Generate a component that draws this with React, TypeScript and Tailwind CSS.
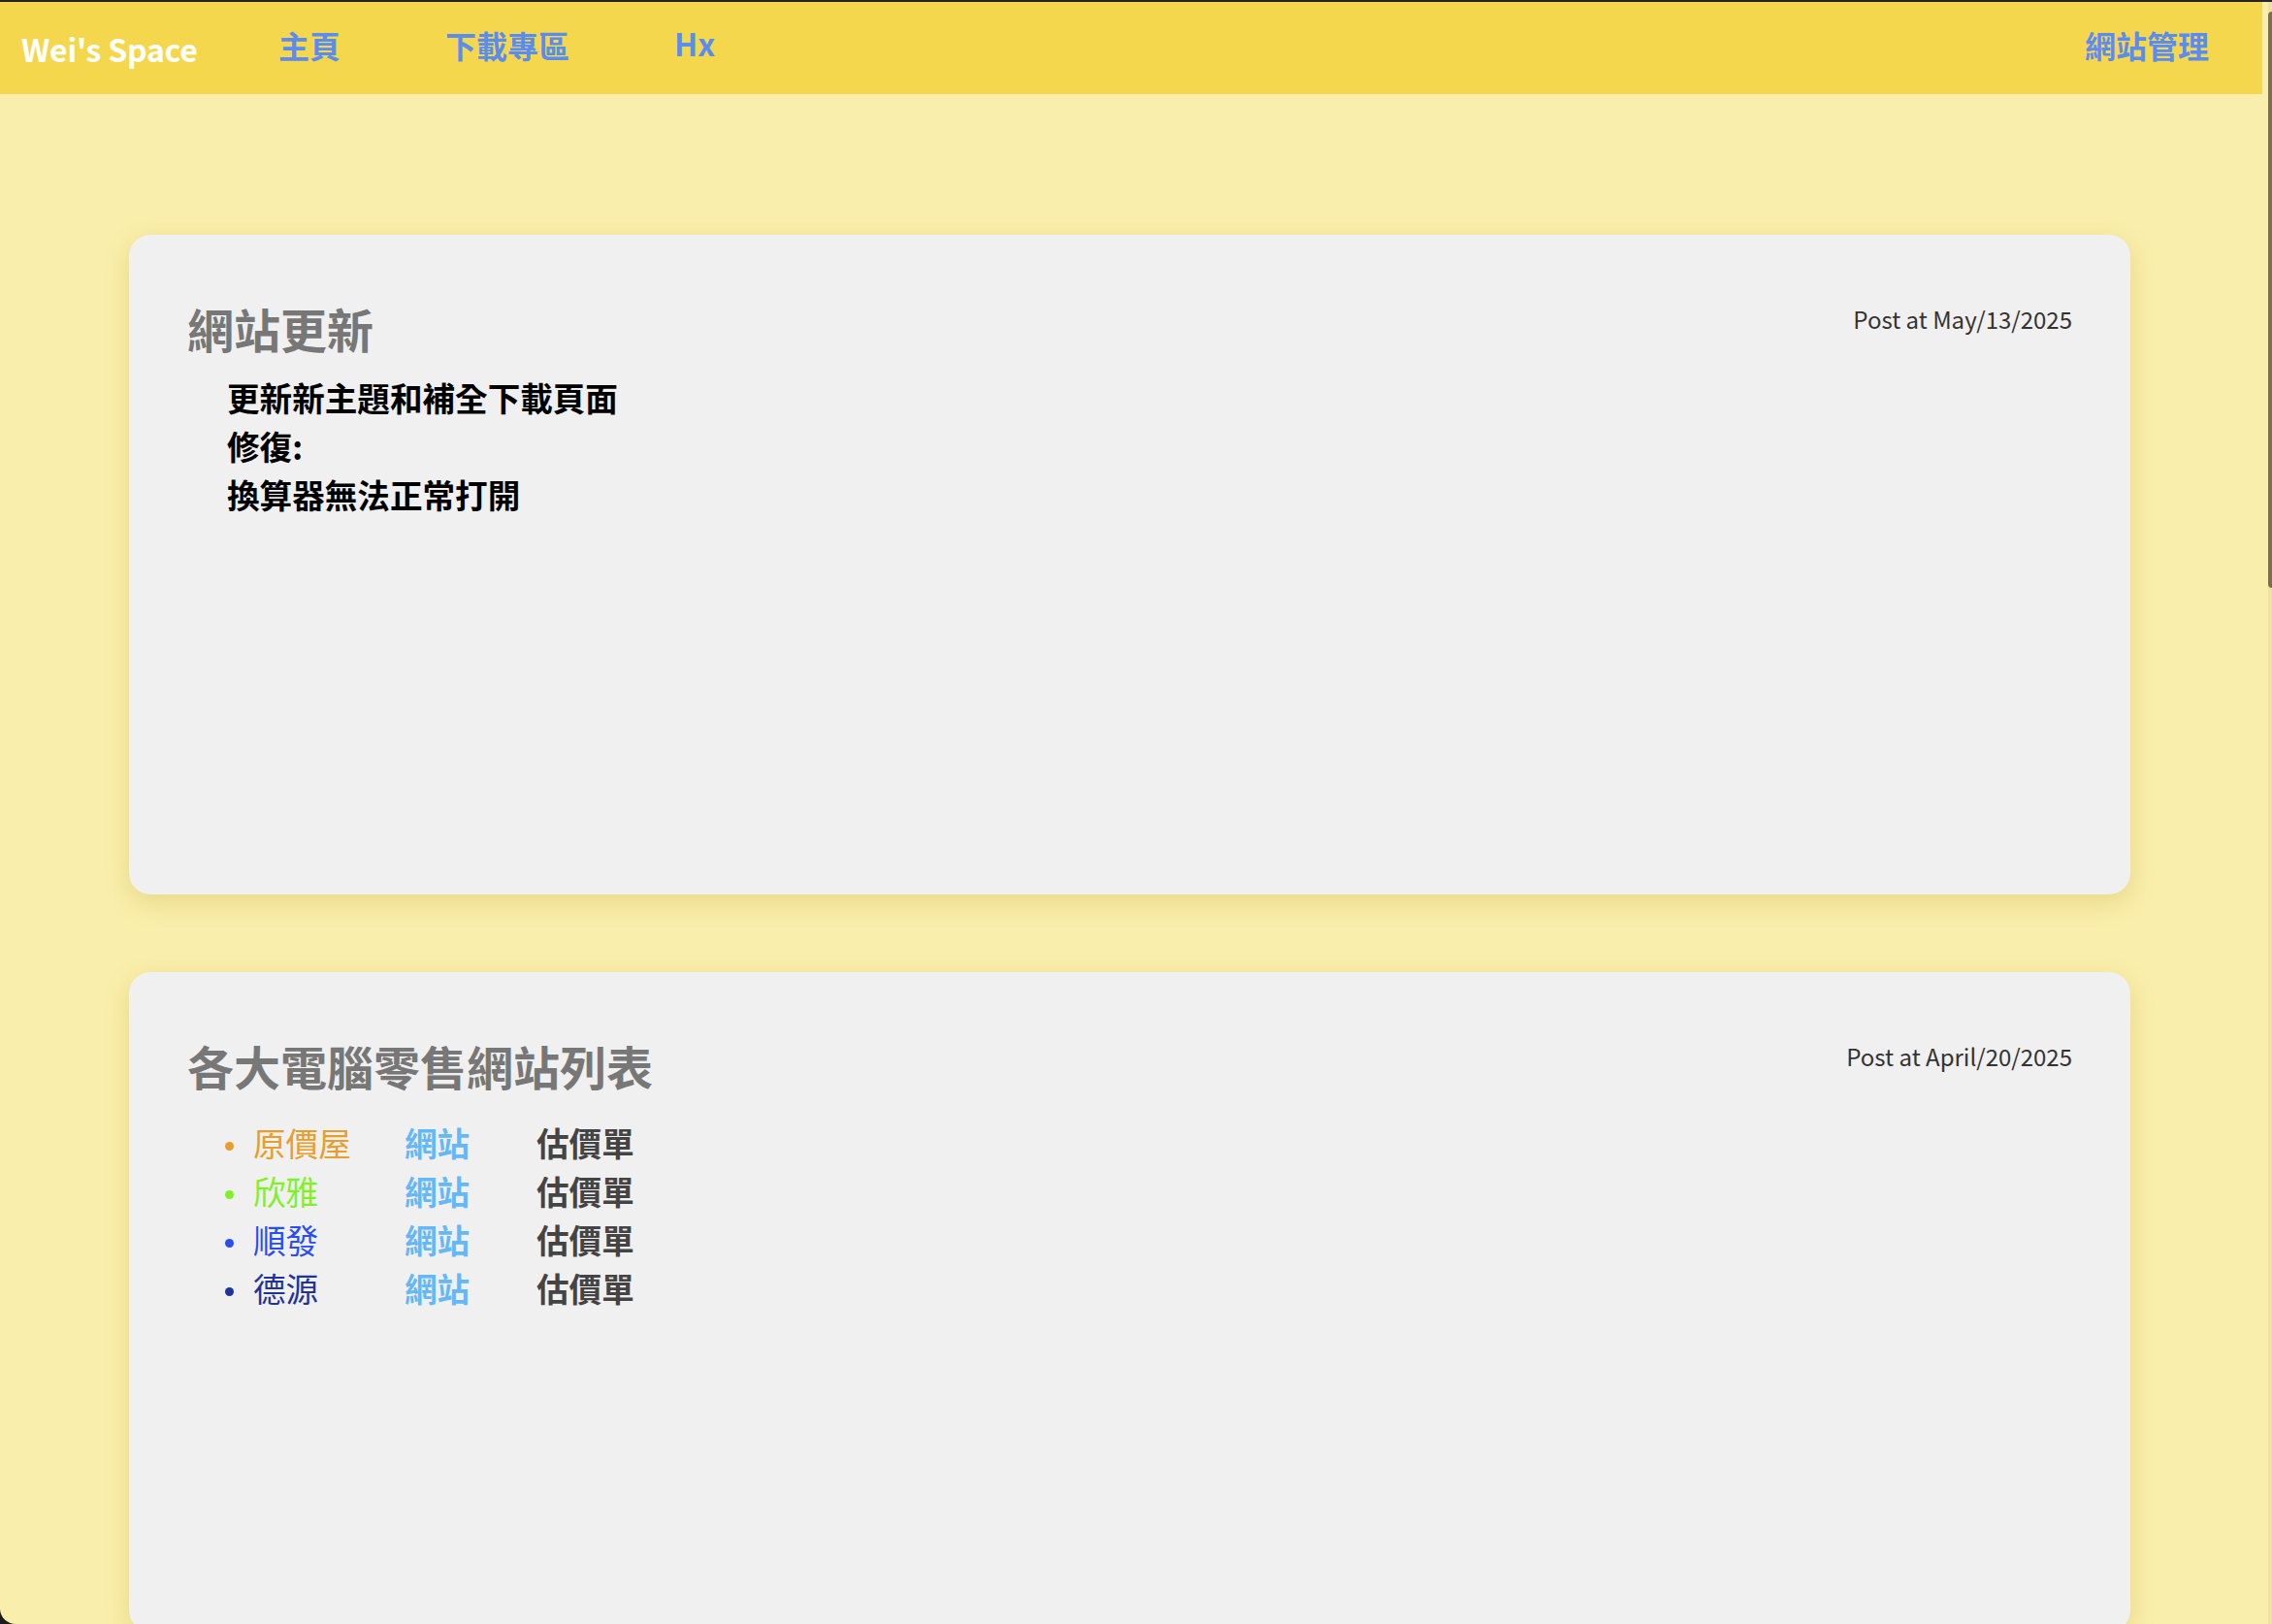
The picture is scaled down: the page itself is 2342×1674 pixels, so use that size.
import * as React from "react";

const shops = [
  { name: "原價屋", color: "text-[#e89e2a]", dot: "bg-[#e89e2a]" },
  { name: "欣雅", color: "text-[#80f028]", dot: "bg-[#80f028]" },
  { name: "順發", color: "text-[#2a4cf5]", dot: "bg-[#2a4cf5]" },
  { name: "德源", color: "text-[#1f3399]", dot: "bg-[#1f3399]" },
];

function Card({
  title,
  date,
  children,
}: {
  title: string;
  date: string;
  children: React.ReactNode;
}) {
  return (
    <section className="h-[680px] shrink-0 rounded-[22px] bg-[#f0f0f0] px-[60px] pt-[72px] shadow-[0_8px_26px_rgba(170,140,20,0.22)]">
      <div className="flex items-start justify-between">
        <h2 className="text-[48px] font-bold leading-none text-[#777]">{title}</h2>
        <p className="mt-[3px] text-[24px] leading-none text-[#333]">{date}</p>
      </div>
      {children}
    </section>
  );
}

export default function App() {
  return (
    <div className="flex h-[1674px] flex-col overflow-hidden bg-[#1c1c1c] font-['Noto_Sans_CJK_TC','Noto_Sans',sans-serif]">
      <div className="h-[2px] shrink-0 bg-[#262626]" />
      <div className="flex min-h-0 flex-1 overflow-hidden rounded-bl-[16px] bg-[#f9eeab]">
        <main className="flex min-w-0 flex-1 flex-col">
          <nav className="flex h-[95px] shrink-0 items-center bg-[#f5d74e] pb-[8px] pl-[22px] pr-[55px]">
            <a className="mt-[8px] w-[265px] text-[32px] font-bold leading-none tracking-[-0.2px] text-white">Wei's Space</a>
            <a className="w-[172px] text-[32px] font-bold leading-none text-[#5b8def]">主頁</a>
            <a className="w-[236px] text-[32px] font-bold leading-none text-[#5b8def]">下載專區</a>
            <a className="mb-[4px] text-[32px] font-bold leading-none text-[#5b8def]">Hx</a>
            <a className="ml-auto text-[32px] font-bold leading-none text-[#5b8def]">網站管理</a>
          </nav>

          <div className="flex flex-col gap-[80px] pl-[133px] pr-[136px] pt-[145px]">
            <Card title="網站更新" date="Post at May/13/2025">
              <div className="ml-[41px] mt-[23px] text-[33.6px] font-bold leading-[50px] text-black">
                <p>更新新主題和補全下載頁面</p>
                <p>修復:</p>
                <p>換算器無法正常打開</p>
              </div>
            </Card>

            <Card title="各大電腦零售網站列表" date="Post at April/20/2025">
              <ul className="mt-[31px] text-[33.6px] leading-[50px]">
                {shops.map((s) => (
                  <li key={s.name} className="flex h-[50px] items-center">
                    <span className="flex w-[68px] pl-[39px]">
                      <span className={`mt-[6px] h-[9px] w-[9px] rounded-full ${s.dot}`} />
                    </span>
                    <span className={`w-[156px] font-normal ${s.color}`}>{s.name}</span>
                    <a className="w-[136px] font-bold text-[#64b8f8]">網站</a>
                    <span className="font-bold text-[#444]">估價單</span>
                  </li>
                ))}
              </ul>
            </Card>
          </div>
        </main>

        <div className="flex w-[10px] shrink-0 justify-end">
          <div className="w-[4px] bg-[#efe2a2]">
            <div className="mt-[10px] h-[594px] rounded-tl-[4px] rounded-bl-[4px] bg-[#7a6e4c]" />
          </div>
        </div>
      </div>
    </div>
  );
}
